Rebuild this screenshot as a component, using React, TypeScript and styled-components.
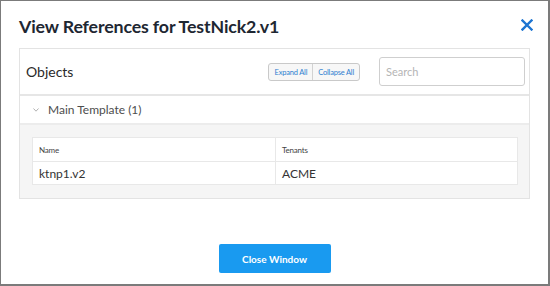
import React from "react"
import styled, { createGlobalStyle } from "styled-components"

const GlobalStyle = createGlobalStyle`
  body {
    margin: 0;
    font-family: Lato, "Open Sans", sans-serif;
    background: #ffffff;
  }
`

const Dialog = styled.div`
  box-sizing: border-box;
  width: 550px;
  height: 286px;
  background: #ffffff;
  border-style: solid;
  border-color: #7b7b7b;
  border-width: 1px 2px 2px 1px;
  display: flex;
  flex-direction: column;
`

const TitleBar = styled.div`
  display: flex;
  align-items: center;
  justify-content: space-between;
  height: 47px;
  padding: 0 15px 0 18px;
`

const Title = styled.h1`
  margin: 0;
  font-size: 17.8px;
  font-weight: 700;
  color: #1e2732;
  letter-spacing: -0.15px;
  padding-top: 2px;
`

const CloseIcon = styled.button`
  border: none;
  background: none;
  padding: 0;
  width: 12px;
  height: 12px;
  display: flex;
  cursor: pointer;
`

const Panel = styled.div`
  margin: 0 18px;
  border: 1px solid #e3e3e3;
  display: flex;
  flex-direction: column;
`

const PanelHeader = styled.div`
  display: flex;
  align-items: center;
  height: 45px;
  padding: 0 4px 0 6px;
  border-bottom: 2px solid #e6e6e6;
`

const PanelTitle = styled.div`
  flex: 1;
  font-size: 14px;
  color: #2a2a2a;
`

const ButtonGroup = styled.div`
  display: flex;
  height: 18px;
  box-sizing: border-box;
  border: 1px solid #c9c9c9;
  border-radius: 3px;
  background: #f7f7f7;
  margin-right: 19px;
  margin-top: 1px;
`

const GroupButton = styled.button<{ $first?: boolean }>`
  border: none;
  border-left: ${({ $first }) => ($first ? "none" : "1px solid #d2d2d2")};
  background: none;
  padding: 0 5px 0 ${({ $first }) => ($first ? "6px" : "5px")};
  font-family: Lato, sans-serif;
  font-size: 7.5px;
  letter-spacing: -0.2px;
  color: #2f7fd0;
  cursor: pointer;
`

const SearchInput = styled.input`
  box-sizing: border-box;
  width: 146px;
  height: 29px;
  border: 1px solid #cfcfcf;
  border-radius: 3px;
  padding: 0 6px;
  font-family: Lato, sans-serif;
  font-size: 11px;
  color: #333;
  &::placeholder {
    color: #b5b5b5;
  }
`

const GroupRow = styled.div`
  display: flex;
  align-items: center;
  height: 27px;
  padding-left: 13px;
  border-bottom: 2px solid #ececec;
  font-size: 12px;
  color: #4d4d4d;
  gap: 9px;
`

const Chevron = styled.svg`
  width: 6px;
  height: 4px;
`

const GroupBody = styled.div`
  background: #f5f5f5;
  padding: 12px 11px 13px 12px;
`

const Table = styled.div`
  display: grid;
  grid-template-columns: 1fr 1fr;
  background: #ffffff;
  border: 1px solid #e8e8e8;
`

const Cell = styled.div<{ $head?: boolean; $last?: boolean }>`
  display: flex;
  align-items: center;
  height: ${({ $head }) => ($head ? "23px" : "22px")};
  padding-left: 6px;
  border-left: ${({ $last }) => ($last ? "1px solid #e8e8e8" : "none")};
  border-bottom: ${({ $head }) => ($head ? "1px solid #e8e8e8" : "none")};
  font-size: ${({ $head }) => ($head ? "8px" : "12px")};
  letter-spacing: ${({ $head }) => ($head ? "-0.2px" : "0")};
  color: ${({ $head }) => ($head ? "#444" : "#333")};
`

const Footer = styled.div`
  flex: 1;
  display: flex;
  justify-content: center;
  padding-top: 45px;
`

const PrimaryButton = styled.button`
  width: 112px;
  height: 29px;
  border: none;
  border-radius: 2px;
  background: #199af0;
  color: #ffffff;
  font-family: Lato, sans-serif;
  font-size: 10px;
  font-weight: 700;
  cursor: pointer;
`

export default function App() {
  return (
    <>
      <GlobalStyle />
      <Dialog>
        <TitleBar>
          <Title>View References for TestNick2.v1</Title>
          <CloseIcon aria-label="Close">
            <svg width="12" height="12" viewBox="0 0 12 12">
              <path
                d="M1.5 1.5 L10.5 10.5 M10.5 1.5 L1.5 10.5"
                stroke="#1c74d1"
                strokeWidth="2.4"
                strokeLinecap="square"
              />
            </svg>
          </CloseIcon>
        </TitleBar>
        <Panel>
          <PanelHeader>
            <PanelTitle>Objects</PanelTitle>
            <ButtonGroup>
              <GroupButton $first>Expand All</GroupButton>
              <GroupButton>Collapse All</GroupButton>
            </ButtonGroup>
            <SearchInput placeholder="Search" />
          </PanelHeader>
          <GroupRow>
            <Chevron viewBox="0 0 6 4">
              <path d="M0.5 0.5 L3 3.2 L5.5 0.5" fill="none" stroke="#a8a8a8" strokeWidth="0.9" />
            </Chevron>
            Main Template (1)
          </GroupRow>
          <GroupBody>
            <Table>
              <Cell $head>Name</Cell>
              <Cell $head $last>Tenants</Cell>
              <Cell>ktnp1.v2</Cell>
              <Cell $last>ACME</Cell>
            </Table>
          </GroupBody>
        </Panel>
        <Footer>
          <div>
            <PrimaryButton>Close Window</PrimaryButton>
          </div>
        </Footer>
      </Dialog>
    </>
  )
}
